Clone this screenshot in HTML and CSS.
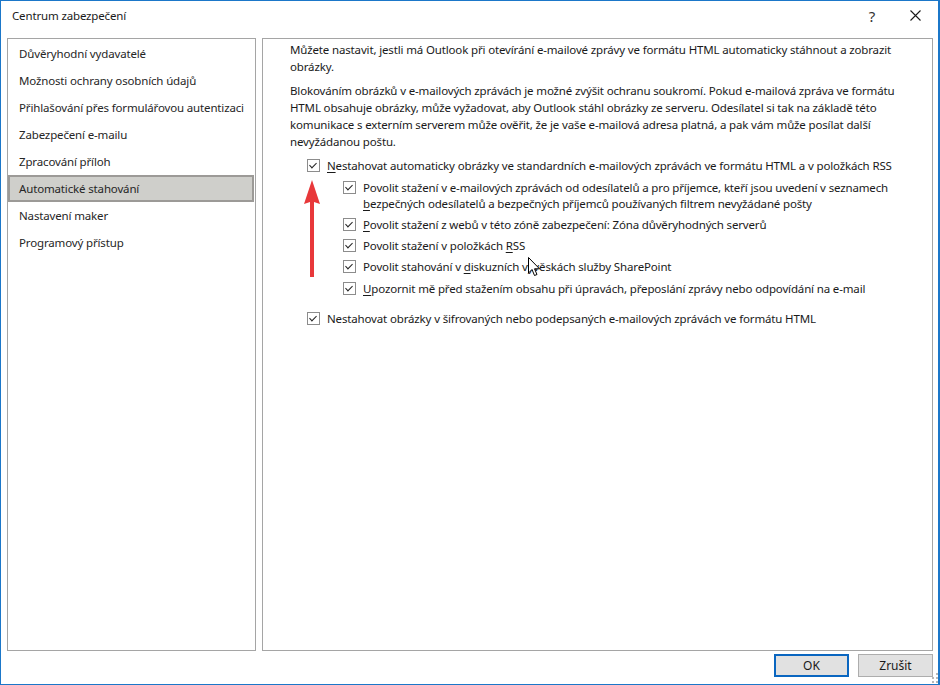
FILE: index.html
```html
<!DOCTYPE html>
<html lang="cs">
<head>
    <meta charset="UTF-8">
    <title>Centrum zabezpečení</title>
    <link rel="stylesheet" href="styles.css">
</head>
<body>
    <div class="window">
        <div class="titlebar">
            <span class="title">Centrum zabezpečení</span>
            <span class="help">?</span>
            <svg class="close" width="11" height="11" viewBox="0 0 11 11">
                <path d="M0.5 0.5 L10.5 10.5 M10.5 0.5 L0.5 10.5" stroke="#1a1a1a" stroke-width="1.1" fill="none"/>
            </svg>
        </div>

        <div class="main">
            <ul class="nav">
                <li>Důvěryhodní vydavatelé</li>
                <li>Možnosti ochrany osobních údajů</li>
                <li>Přihlašování přes formulářovou autentizaci</li>
                <li>Zabezpečení e-mailu</li>
                <li>Zpracování příloh</li>
                <li class="active">Automatické stahování</li>
                <li>Nastavení maker</li>
                <li>Programový přístup</li>
            </ul>

            <div class="content">
                <p class="intro">Můžete nastavit, jestli má Outlook při otevírání e-mailové zprávy ve formátu HTML automaticky stáhnout a zobrazit<br>obrázky.</p>
                <p class="intro">Blokováním obrázků v e-mailových zprávách je možné zvýšit ochranu soukromí. Pokud e-mailová zpráva ve formátu<br>HTML obsahuje obrázky, může vyžadovat, aby Outlook stáhl obrázky ze serveru. Odesílatel si tak na základě této<br>komunikace s externím serverem může ověřit, že je vaše e-mailová adresa platná, a pak vám může posílat další<br>nevyžádanou poštu.</p>

                <div class="option first">
                    <span class="box"></span>
                    <span class="label"><u>N</u>estahovat automaticky obrázky ve standardních e-mailových zprávách ve formátu HTML a v položkách RSS</span>
                </div>
                <div class="option sub">
                    <span class="box"></span>
                    <span class="label">Povolit stažení v e-mailových zprávách od odesílatelů a pro příjemce, kteří jsou uvedení v seznamech<br><u>b</u>ezpečných odesílatelů a bezpečných příjemců používaných filtrem nevyžádané pošty</span>
                </div>
                <div class="option sub">
                    <span class="box"></span>
                    <span class="label"><u>P</u>ovolit stažení z webů v této zóně zabezpečení: Zóna důvěryhodných serverů</span>
                </div>
                <div class="option sub">
                    <span class="box"></span>
                    <span class="label">Povolit stažení v položkách <u>R</u>SS</span>
                </div>
                <div class="option sub">
                    <span class="box"></span>
                    <span class="label">Povolit stahování v <u>d</u>iskuzních vývěskách služby SharePoint</span>
                </div>
                <div class="option sub">
                    <span class="box"></span>
                    <span class="label"><u>U</u>pozornit mě před stažením obsahu při úpravách, přeposlání zprávy nebo odpovídání na e-mail</span>
                </div>
                <div class="option last">
                    <span class="box"></span>
                    <span class="label">Nestahovat obrázky v šifrovaných nebo podepsaných e-mailových zprávách ve formátu HTML</span>
                </div>

                <!-- red annotation arrow -->
                <svg class="arrow" width="16" height="98" viewBox="0 0 16 98">
                    <path d="M8 0 L16 24 L10 22 L10 97 L6 97 L6 22 L0 24 Z" fill="#e8383a"/>
                </svg>

                <!-- mouse pointer -->
                <svg class="pointer" width="13" height="20" viewBox="0 0 13 20">
                    <path d="M0.5 0.5 L0.5 16 L4 12.5 L6.5 18.5 L9 17.5 L6.5 11.8 L11.5 11.8 Z" fill="#fff" stroke="#000" stroke-width="1"/>
                </svg>
            </div>
        </div>

        <div class="footer">
            <button class="btn default">OK</button>
            <button class="btn">Zrušit</button>
            <svg class="grip" width="6" height="10" viewBox="0 0 6 10">
                <rect x="4" y="0" width="2" height="2" fill="#b8b8b8"/>
                <rect x="0" y="4" width="2" height="2" fill="#b8b8b8"/>
                <rect x="4" y="4" width="2" height="2" fill="#b8b8b8"/>
                <rect x="0" y="8" width="2" height="2" fill="#b8b8b8"/>
                <rect x="4" y="8" width="2" height="2" fill="#b8b8b8"/>
            </svg>
        </div>
    </div>
</body>
</html>
```

FILE: styles.css
```css
* {
    box-sizing: border-box;
}

body {
    margin: 0;
    background: #fff;
    font-family: "Noto Sans", "Segoe UI", sans-serif;
    font-size: 11.5px;
    letter-spacing: -0.15px;
    color: #1a1a1a;
}

.window {
    width: 940px;
    height: 685px;
    border: 1px solid #1b77c9;
    border-right-width: 2px;
    display: flex;
    flex-direction: column;
    background: #fff;
}

/* title bar */
.titlebar {
    height: 37px;
    display: flex;
    align-items: flex-start;
    padding: 7px 0 0 11px;
}

.title {
    flex: 1;
    line-height: 16px;
}

.help {
    font-size: 15px;
    line-height: 16px;
    color: #333;
    margin-right: 35px;
}

.close {
    margin: 2px 17px 0 0;
}

/* panels */
.main {
    height: 613px;
    display: flex;
    gap: 6px;
    padding: 0 5px 0 6px;
}

.nav {
    width: 249px;
    margin: 0;
    padding: 1px 0 0;
    list-style: none;
    border: 1px solid #a5a5a5;
}

.nav li {
    height: 27px;
    line-height: 27px;
    padding-left: 11px;
    color: #262626;
    white-space: nowrap;
}

.nav li.active {
    margin-right: 1px;
    background: #cfcfcb;
    border: 2px solid #9c9a97;
    line-height: 23px;
    padding-left: 9px;
}

.content {
    flex: 1;
    position: relative;
    border: 1px solid #a5a5a5;
    padding: 3px 4px 0 27px;
}

.intro {
    margin: 0 0 8px;
    line-height: 16.7px;
}

.option {
    display: flex;
    align-items: flex-start;
    gap: 7px;
    line-height: 16px;
    margin-top: 5.3px;
}

.option.first {
    margin-top: 5.5px;
    padding-left: 17px;
}

.option.sub {
    padding-left: 53px;
}

.option.last {
    margin-top: 14.5px;
    padding-left: 17px;
}

.box {
    flex: none;
    width: 13px;
    height: 13px;
    margin-top: 1px;
    border: 1px solid #8c8c8c;
    background: #fff;
    position: relative;
}

/* check mark */
.box::after {
    content: "";
    position: absolute;
    left: 3px;
    top: 1px;
    width: 3px;
    height: 6px;
    border: solid #222;
    border-width: 0 1px 1px 0;
    transform: rotate(45deg);
}

.label u {
    text-decoration-thickness: 1px;
    text-underline-offset: 2px;
}

.arrow {
    position: absolute;
    left: 41px;
    top: 141px;
}

.pointer {
    position: absolute;
    left: 265px;
    top: 218px;
}

/* buttons */
.footer {
    flex: 1;
    display: flex;
    justify-content: flex-end;
    align-items: flex-start;
    gap: 9px;
    padding: 3px 0 0;
    position: relative;
}

.btn {
    width: 75px;
    height: 23px;
    font-family: inherit;
    font-size: 12px;
    color: #1a1a1a;
    background: #e1e1e1;
    border: 1px solid #adadad;
    padding: 0;
}

.btn.default {
    border: 2px solid #0a66c0;
}

.btn:last-of-type {
    margin-right: 5px;
}

.grip {
    position: absolute;
    right: 0;
    bottom: 1px;
}
```
